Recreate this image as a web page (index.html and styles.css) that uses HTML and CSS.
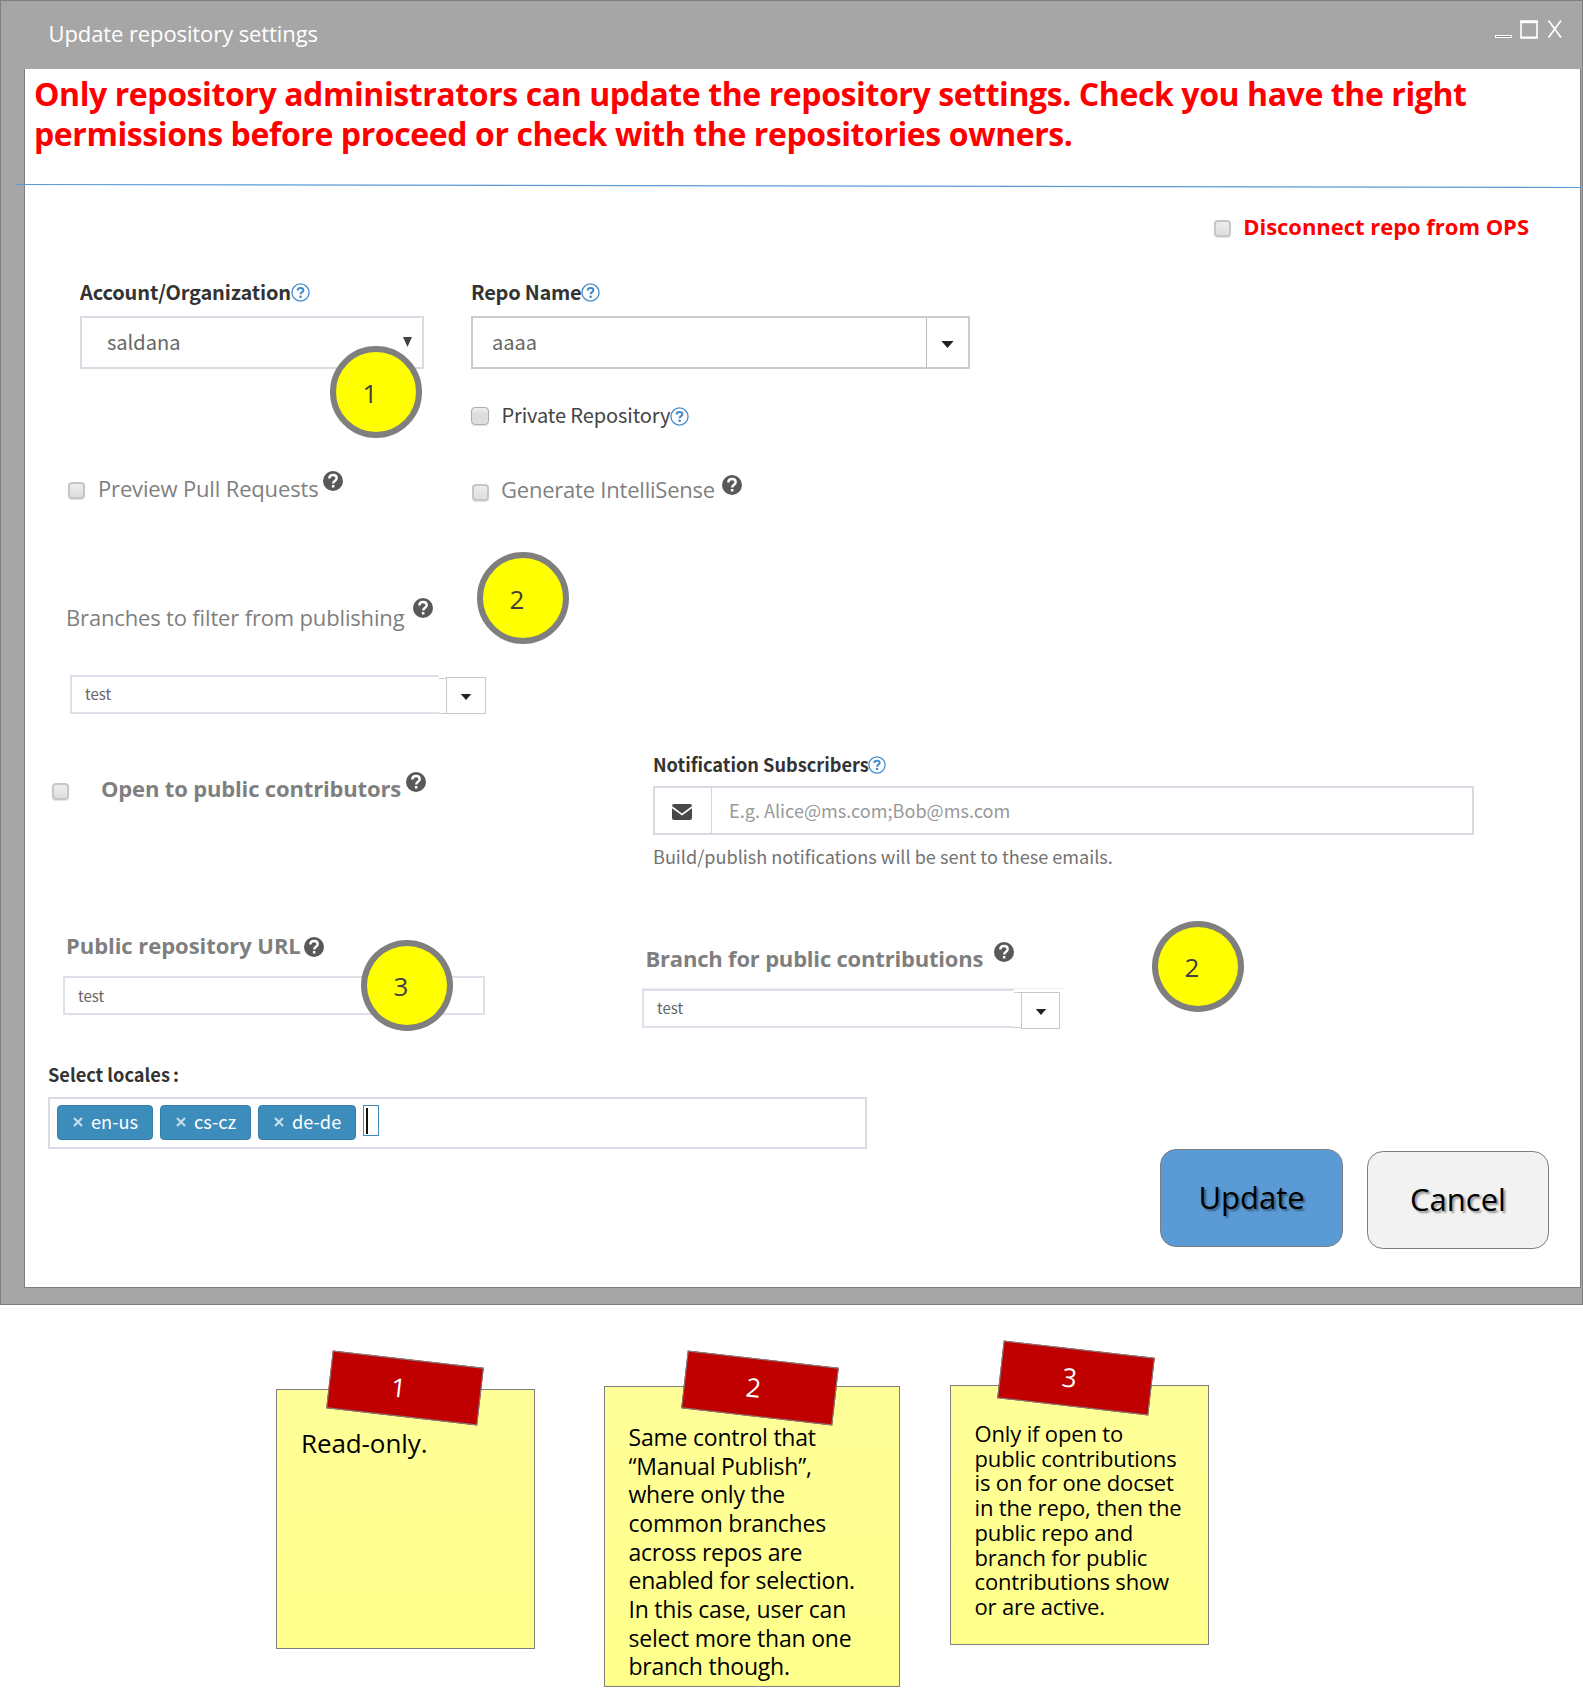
FILE: index.html
```
<!DOCTYPE html>
<html lang="en">
<head>
<meta charset="utf-8">
<title>Update repository settings</title>
<link rel="stylesheet" href="styles.css">
</head>
<body>
<svg class="defs" aria-hidden="true">
  <symbol id="help-outline" viewBox="0 0 20 20">
    <circle cx="10" cy="10" r="9" fill="#fff" stroke="#428bca" stroke-width="1.4"/>
    <path d="M7 7.800C7 6 8.200 5.200 10 5.200s3 .9 3 2.400c0 2-2.900 2-2.900 4.300" fill="none" stroke="#428bca" stroke-width="2.200"/>
    <circle cx="10.100" cy="14.500" r="1.400" fill="#428bca"/>
  </symbol>
  <symbol id="help-solid" viewBox="0 0 20 20">
    <circle cx="10" cy="10" r="10" fill="#58595b"/>
    <path d="M6.300 7.500C6.300 5 8 4 10 4s3.700 1.100 3.700 3.200c0 2.600-3.500 2.600-3.500 5.300" fill="none" stroke="#fff" stroke-width="2.400"/>
    <rect x="8.900" y="14" width="2.500" height="2.500" fill="#fff"/>
  </symbol>
  <symbol id="caret" viewBox="0 0 14 8"><path d="M0 0h14L7 8z" fill="#222"/></symbol>
</svg>

<div class="window">
  <header class="titlebar">
    <h1 class="title">Update repository settings</h1>
    <svg class="window-buttons" width="70" height="22" viewBox="0 0 70 22">
      <rect x="1.500" y="17.500" width="16" height="2" fill="#8c8c8c" stroke="#fff"/>
      <path d="M27 3h16v17H27z" fill="none" stroke="#fff" stroke-width="1.600"/>
      <path d="M26.200 4h17.600" stroke="#fff" stroke-width="2.400"/>
      <path d="M26.200 19.300h17.600" stroke="#fff" stroke-width="1.600"/>
      <path d="M54.500 2.500L67 19.500M67 2.500L54.500 19.500" stroke="#fff" stroke-width="1.700"/>
    </svg>
  </header>

  <main class="panel">
    <p class="alert">Only repository administrators can update the repository settings. Check you have the right<br>permissions before proceed or check with the repositories owners.</p>
    <svg class="rule" width="1568" height="6" viewBox="0 0 1568 6"><path d="M0 1.500L1568 4.500" stroke="#5b9bd5" stroke-width="1.200"/></svg>

    <div class="row disconnect">
      <span class="checkbox soft"></span><span class="text danger">Disconnect repo from OPS</span>
    </div>

    <section class="upper">
      <div class="column">
        <div class="row account-label"><span class="label">Account/Organization</span><svg class="help-outline"><use href="#help-outline"/></svg></div>
        <div class="select"><span>saldana</span><svg class="arrow" viewBox="0 0 9 10"><path d="M0 0h9L4.500 10z" fill="#444"/></svg></div>
        <div class="row preview"><span class="checkbox soft"></span><span class="text">Preview Pull Requests</span><svg class="help-solid"><use href="#help-solid"/></svg></div>
        <div class="row branches"><span class="text">Branches to filter from publishing</span><svg class="help-solid"><use href="#help-solid"/></svg></div>
        <div class="combo filter-combo"><div class="combo-value">test</div><div class="combo-gap"></div><div class="combo-button"><svg class="caret small"><use href="#caret"/></svg></div></div>
      </div>
      <div class="column">
        <div class="row repo-label"><span class="label">Repo Name</span><svg class="help-outline"><use href="#help-outline"/></svg></div>
        <div class="repo-select"><span>aaaa</span><div class="repo-toggle"><svg class="caret"><use href="#caret"/></svg></div></div>
        <div class="row private"><span class="checkbox large"></span><span class="label regular">Private Repository</span><svg class="help-outline"><use href="#help-outline"/></svg></div>
        <div class="row intellisense"><span class="checkbox soft"></span><span class="text">Generate IntelliSense</span><svg class="help-solid"><use href="#help-solid"/></svg></div>
      </div>
    </section>

    <section class="lower">
      <div class="column">
        <div class="row open"><span class="checkbox soft"></span><span class="text bold">Open to public contributors</span><svg class="help-solid"><use href="#help-solid"/></svg></div>
        <div class="row public-url"><span class="text bold">Public repository URL</span><svg class="help-solid"><use href="#help-solid"/></svg></div>
        <div class="url-input">test</div>
      </div>
      <div class="column">
        <div class="row notify-label"><span class="label small">Notification Subscribers</span><svg class="help-outline small"><use href="#help-outline"/></svg></div>
        <div class="email">
          <div class="email-icon"><svg width="20" height="16" viewBox="0 0 20 16"><path d="M2 0h16a2 2 0 0 1 2 2L10 9.500 0 2a2 2 0 0 1 2-2zM0 4.300l10 7.200 10-7.200V14a2 2 0 0 1-2 2H2a2 2 0 0 1-2-2z" fill="#484848"/></svg></div>
          <div class="email-text">E.g. Alice@ms.com;Bob@ms.com</div>
        </div>
        <div class="hint">Build/publish notifications will be sent to these emails.</div>
        <div class="row contrib"><span class="text bold">Branch for public contributions</span><svg class="help-solid"><use href="#help-solid"/></svg></div>
        <div class="combo contrib-combo"><div class="combo-value">test</div><div class="combo-gap"></div><div class="combo-button"><svg class="caret small"><use href="#caret"/></svg></div></div>
      </div>
    </section>

    <section class="locales">
      <div class="row"><span class="label small">Select locales<span class="colon">:</span></span></div>
      <div class="tags">
        <span class="tag"><svg class="cross" viewBox="0 0 10 10"><path d="M1 1l8 8M9 1L1 9"/></svg>en-us</span>
        <span class="tag tag-cs"><svg class="cross" viewBox="0 0 10 10"><path d="M1 1l8 8M9 1L1 9"/></svg>cs-cz</span>
        <span class="tag tag-de"><svg class="cross" viewBox="0 0 10 10"><path d="M1 1l8 8M9 1L1 9"/></svg>de-de</span>
        <span class="tag-input"></span>
      </div>
    </section>

    <div class="actions">
      <button class="button primary">Update</button>
      <button class="button cancel">Cancel</button>
    </div>
  </main>
</div>

<section class="notes">
  <article class="note note-1"><div class="tape"><span>1</span></div><p>Read-only.</p></article>
  <article class="note note-2"><div class="tape"><span>2</span></div><p>Same control that<br>“Manual Publish”,<br>where only the<br>common branches<br>across repos are<br>enabled for selection.<br>In this case, user can<br>select more than one<br>branch though.</p></article>
  <article class="note note-3"><div class="tape"><span>3</span></div><p>Only if open to<br>public contributions<br>is on for one docset<br>in the repo, then the<br>public repo and<br>branch for public<br>contributions show<br>or are active.</p></article>
</section>

<div class="badge badge-account">1</div>
<div class="badge badge-filter">2</div>
<div class="badge badge-url">3</div>
<div class="badge badge-contrib">2</div>
</body>
</html>
```
FILE: styles.css
```
* { box-sizing: border-box; }

body {
  margin: 0;
  position: relative;
  width: 1583px;
  height: 1695px;
  overflow: hidden;
  background: #fff;
  font-family: "Open Sans", sans-serif;
}

p, h1 { margin: 0; font-weight: 400; }
.defs { position: absolute; width: 0; height: 0; }
svg { display: block; flex: none; }

/* Window frame */
.window {
  height: 1305px;
  padding-left: 23px;
  padding-right: 1px;
  border: 1px solid #7f7f7f;
  background: #a6a6a6;
}
.titlebar {
  display: flex;
  justify-content: space-between;
  height: 68px;
  padding: 17px 17px 0 24.500px;
}
.title {
  font-size: 22px;
  line-height: 30px;
  letter-spacing: -0.1px;
  color: #fff;
}
.panel {
  height: 1219px;
  background: #fff;
  border: solid #7f7f7f;
  border-width: 0 1px 1px;
}
.alert {
  height: 115px;
  padding: 4.500px 0 0 9px;
  font-size: 32px;
  font-weight: 700;
  line-height: 40px;
  letter-spacing: -0.41px;
  color: #f00;
  white-space: nowrap;
}
.rule { margin: -1px 0 -1px -9px; }

/* Shared form pieces */
.row { display: flex; height: 30px; line-height: 30px; white-space: nowrap; }
.text { font-size: 22px; line-height: 28px; color: #7f7f7f; letter-spacing: -0.16px; }
.text.bold { font-weight: 700; }
.text.danger { font-weight: 700; color: #f00; letter-spacing: -0.03px; line-height: 32px; }
.label, .select, .repo-select, .combo, .url-input, .email, .hint, .tags {
  font-family: "Noto Sans CJK SC", sans-serif;
}
.label { font-size: 20px; line-height: 32px; font-weight: 700; color: #333; letter-spacing: -0.15px; }
.label.regular { font-weight: 400; color: #444; letter-spacing: -0.1px; }
.label.small { font-size: 18.200px; letter-spacing: 0; }
.help-outline { width: 19px; height: 19px; }
.help-outline.small { width: 18px; height: 18px; }
.help-solid { width: 20px; height: 20px; overflow: visible; }
.caret { width: 13px; height: 7px; }
.caret.small { width: 12px; height: 6px; }
.checkbox {
  flex: none;
  width: 18px;
  height: 18px;
  border: 1.500px solid #adadad;
  border-radius: 4px;
  background: linear-gradient(#f0f0f0, #dcdcdc 40%, #dedede);
  box-shadow: 0 1px 1px rgba(0, 0, 0, .12);
}
.checkbox.soft { width: 17px; height: 17px; border: 2px solid #c6c6c6; background: linear-gradient(#ededed, #dedede); }

.disconnect { height: 88px; padding-top: 22px; justify-content: flex-end; padding-right: 51px; }
.disconnect .checkbox { margin: 10px 12px 0 0; }

/* Upper section */
.upper { display: grid; grid-template-columns: 446px 1fr; height: 472px; }
.account-label { padding-left: 55px; }
.account-label .label { width: 210.500px; }
.account-label .help-outline, .repo-label .help-outline { margin-top: 7px; }
.select {
  display: flex;
  justify-content: space-between;
  width: 344px;
  height: 53px;
  margin: 10px 0 0 55px;
  padding: 0 10px 0 25px;
  border: 2px solid #d8dbe3;
  font-size: 20px;
  line-height: 47px;
  color: #666;
}
.arrow { width: 9px; height: 10px; margin-top: 19px; }
.preview { margin-top: 105px; padding-left: 43px; }
.preview .checkbox { margin: 8px 13px 0 0; }
.preview .text { width: 225px; }
.preview .help-solid { margin-top: -3px; }
.branches { margin-top: 99px; padding-left: 41px; }
.branches .text { width: 347px; }
.branches .help-solid { margin-top: -5px; }

.repo-label .label { width: 109.500px; letter-spacing: -0.250px; }
.repo-select {
  display: flex;
  justify-content: space-between;
  width: 499px;
  height: 53px;
  margin-top: 10px;
  padding-left: 19px;
  border: 2px solid #ccc;
  font-size: 20px;
  line-height: 47px;
  color: #666;
}
.repo-toggle {
  display: flex;
  align-items: center;
  justify-content: center;
  width: 42px;
  padding-top: 3px;
  border-left: 1px solid #bbb;
}
.private { margin-top: 30px; }
.private .checkbox { margin: 8px 12.500px 0 0; }
.private .label { width: 168px; }
.private .help-outline { margin-top: 8px; }
.intellisense { margin-top: 46px; }
.intellisense .checkbox { margin: 9px 12px 0 1px; }
.intellisense .text { width: 221px; letter-spacing: -0.220px; }
.intellisense .help-solid { margin-top: 0; }

/* Text box with a detached dropdown button */
.combo { display: flex; font-size: 15px; color: #666; }
.combo > * { flex: none; }
.combo-value {
  height: 39px;
  padding-left: 13px;
  border: 2px solid #dde0e8;
  border-right: 0;
  line-height: 34px;
}
.combo-gap { border: solid #ccc; border-width: 1px 0; margin-top: 3px; height: 36px; }
.combo-button {
  display: flex;
  align-items: center;
  justify-content: center;
  height: 37px;
  margin-top: 2px;
  padding-top: 3px;
  border: 1.500px solid #c8c8c8;
}
.filter-combo { margin: 42px 0 0 45px; }
.filter-combo .combo-value { width: 369px; }
.filter-combo .combo-gap { width: 7px; }
.filter-combo .combo-button { width: 40px; }

/* Lower section */
.lower { display: grid; grid-template-columns: 617px 1fr; height: 310px; }
.open { margin-top: 26px; padding-left: 27px; }
.open .checkbox { margin: 9px 32px 0 0; }
.open .text { width: 305px; }
.open .help-solid { margin-top: -2px; }
.public-url { margin-top: 126px; padding-left: 41px; }
.public-url .text { width: 238px; letter-spacing: -0.05px; line-height: 30px; }
.public-url .help-solid { margin-top: 7px; }
.url-input {
  width: 422px;
  height: 39px;
  margin: 16px 0 0 38px;
  padding-left: 13px;
  border: 2px solid #dde0e8;
  font-size: 15px;
  line-height: 35px;
  color: #666;
}
.notify-label { margin-top: 1px; padding-left: 11px; }
.notify-label .label { width: 215px; line-height: 30px; }
.notify-label .help-outline { margin-top: 7px; }
.email {
  display: flex;
  width: 821px;
  height: 49px;
  margin: 7px 0 0 11px;
  border: 2px solid #d6dae1;
  font-size: 18.100px;
  line-height: 45px;
  color: #999;
}
.email-icon { display: flex; align-items: center; padding: 2px 0 0 17px; width: 57px; border-right: 1.500px solid #d2d6de; }
.email-text { padding-left: 17px; }
.hint { margin: 6px 0 0 11px; font-size: 18.100px; line-height: 30px; color: #737373; }
.contrib { margin-top: 73px; padding-left: 3.500px; }
.contrib .text { width: 348.500px; letter-spacing: -0.200px; }
.contrib .help-solid { margin-top: -2px; }
.contrib-combo { margin-top: 14px; width: 422px; border-top: 1px solid #eee; }
.contrib-combo .combo-value { width: 372px; }
.contrib-combo .combo-gap { width: 7px; }
.contrib-combo .combo-button { width: 39px; margin-top: 3px; }

/* Locale tags */
.locales { height: 91px; padding-left: 23px; }
.colon { margin-left: 3px; }
.tags {
  display: flex;
  width: 819px;
  height: 52px;
  margin-top: 9px;
  padding: 6px 0 0 7px;
  border: 2px solid #d8dbe3;
}
.tag {
  display: flex;
  align-items: center;
  width: 96px;
  height: 35px;
  margin-right: 7px;
  padding: 0 0 3px 15px;
  border: 1px solid #367fa9;
  border-radius: 4px;
  background: #3c8dbc;
  color: #fff;
  font-size: 18.200px;
  line-height: 30px;
  white-space: nowrap;
}
.cross { width: 10px; height: 10px; margin-right: 8px; margin-top: 1px; fill: none; stroke: #c5dded; stroke-width: 2.200; }
.tag-cs { width: 91px; }
.tag-de { width: 98px; }
.tag-input { position: relative; width: 16px; height: 31px; border: 1.500px solid #3c8dbc; }
.tag-input::after { content: ""; position: absolute; left: 2px; top: 2px; width: 2px; height: 26px; background: #111; }

/* Actions */
.actions { display: flex; justify-content: flex-end; gap: 24px; padding-right: 31px; }
.button {
  width: 183px;
  height: 98px;
  padding: 0 0 2px;
  border: 1px solid #7f7f7f;
  border-radius: 16px;
  font: 31px "Open Sans", sans-serif;
  color: #000;
  text-shadow: 2px 2px 2px rgba(0, 0, 0, .4);
}
.primary { background: #5b9bd5; }
.cancel { width: 182px; margin-top: 2px; background: #f2f2f2; }

/* Sticky notes */
.notes { display: flex; align-items: flex-start; padding-left: 276px; }
.note {
  position: relative;
  width: 259px;
  height: 260px;
  margin-top: 84px;
  border: 1px solid #7f7f7f;
  background: linear-gradient(#ff9, #ffff8b);
  white-space: nowrap;
}
.note-1 p { padding: 35px 0 0 24px; font-size: 26px; line-height: 36px; letter-spacing: -0.1px; }
.note-2 { width: 296px; height: 301px; margin: 81px 50px 0 69px; }
.note-2 p { padding: 36px 0 0 23.500px; font-size: 23px; line-height: 28.650px; letter-spacing: -0.220px; }
.note-3 { margin-top: 80px; }
.note-3 p { padding: 35px 0 0 23.500px; font-size: 22px; line-height: 24.700px; letter-spacing: -0.150px; }
.tape {
  position: absolute;
  left: 52.300px;
  top: -31.500px;
  width: 152px;
  height: 58px;
  border: 1px solid #7f7f7f;
  background: #c00000;
  color: #fff;
  font-size: 26px;
  line-height: 57px;
  text-align: center;
  padding-right: 13px;
  transform: rotate(6.500deg);
}
.note-2 .tape { left: 79.300px; top: -28px; }
.note-3 .tape { left: 48.800px; top: -37px; }

/* Numbered annotation badges */
.badge {
  position: absolute;
  width: 92px;
  height: 92px;
  padding-right: 12px;
  border: 6px solid #7f7f7f;
  border-radius: 50%;
  background: #ff0;
  color: #404040;
  font-size: 26px;
  line-height: 82px;
  text-align: center;
}
.badge-account { left: 330px; top: 346px; }
.badge-filter { left: 477px; top: 552px; }
.badge-url { left: 361px; top: 940px; height: 91px; line-height: 80px; }
.badge-contrib { left: 1152px; top: 921px; height: 91px; line-height: 80px; }
```
